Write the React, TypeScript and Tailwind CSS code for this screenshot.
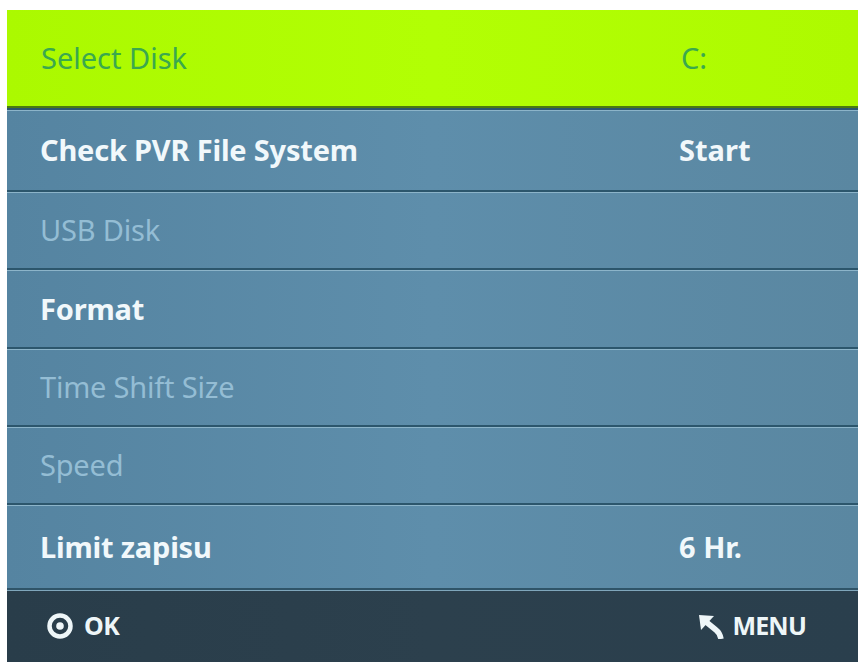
import React from "react";

type Row = { label: string; value?: string; dim?: boolean; h: string };

const rows: Row[] = [
  { label: "Check PVR File System", value: "Start", h: "h-[82px]" },
  { label: "USB Disk", dim: true, h: "h-[78px]" },
  { label: "Format", h: "h-[79px]" },
  { label: "Time Shift Size", dim: true, h: "h-[78px]" },
  { label: "Speed", dim: true, h: "h-[78px]" },
  { label: "Limit zapisu", value: "6 Hr.", h: "h-[85px]" },
];

export default function App() {
  return (
    <div className="w-[862px] h-[665px] bg-white pt-[10px] pl-[7px] pr-[4px] pb-[3px] font-['Noto_Sans',sans-serif]">
      <div className="flex flex-col w-[851px] h-[652px]">
        <div className="h-[98px] flex items-center bg-gradient-to-r from-[#abf900] via-[#b2ff04] to-[#aefa00] border-b-2 border-[#4a7a10] text-[#3aa84e] text-[29px] shrink-0">
          <div className="pl-[34px] w-[674px]">Select Disk</div>
          <div>C:</div>
        </div>
        {rows.map((r) => (
          <div
            key={r.label}
            className={`${r.h} shrink-0 flex items-center border-t-2 border-[#2c566c] shadow-[inset_0_1px_0_#8cb4c9] bg-gradient-to-r from-[#5584a1] via-[#5e8eab] to-[#5a87a1] text-[29px] ${
              r.dim ? "text-[#94bdd4]" : "text-[#f1f8fb] font-bold"
            }`}
          >
            <div className="pl-[33px] w-[672px] tracking-[-0.2px]">{r.label}</div>
            {r.value && <div>{r.value}</div>}
          </div>
        ))}
        <div className="flex-1 flex items-center justify-between border-t-2 border-[#2f5468] shadow-[inset_0_1px_0_#7fa6bb] bg-gradient-to-r from-[#293d4a] via-[#2c404d] to-[#2a3f4d] text-[#eef6f8] font-bold text-[25px] pl-[39px] pr-[52px]">
          <div className="flex items-center gap-[10px]">
            <svg width="28" height="28" viewBox="0 0 28 28" className="shrink-0">
              <circle cx="14" cy="14" r="10.5" fill="none" stroke="#eef6f8" strokeWidth="4.5" />
              <circle cx="14" cy="14" r="3.8" fill="#eef6f8" />
            </svg>
            <span className="tracking-[-0.5px]">OK</span>
          </div>
          <div className="flex items-center gap-[6px]">
            <svg width="28" height="26" viewBox="0 0 28 26" className="shrink-0">
              <polygon points="1,2 16,3 3,17" fill="#eef6f8" />
              <path d="M7 8 L18 17 Q22 20 23 26" fill="none" stroke="#eef6f8" strokeWidth="5.5" />
            </svg>
            <span className="tracking-[-0.8px]">MENU</span>
          </div>
        </div>
      </div>
    </div>
  );
}
